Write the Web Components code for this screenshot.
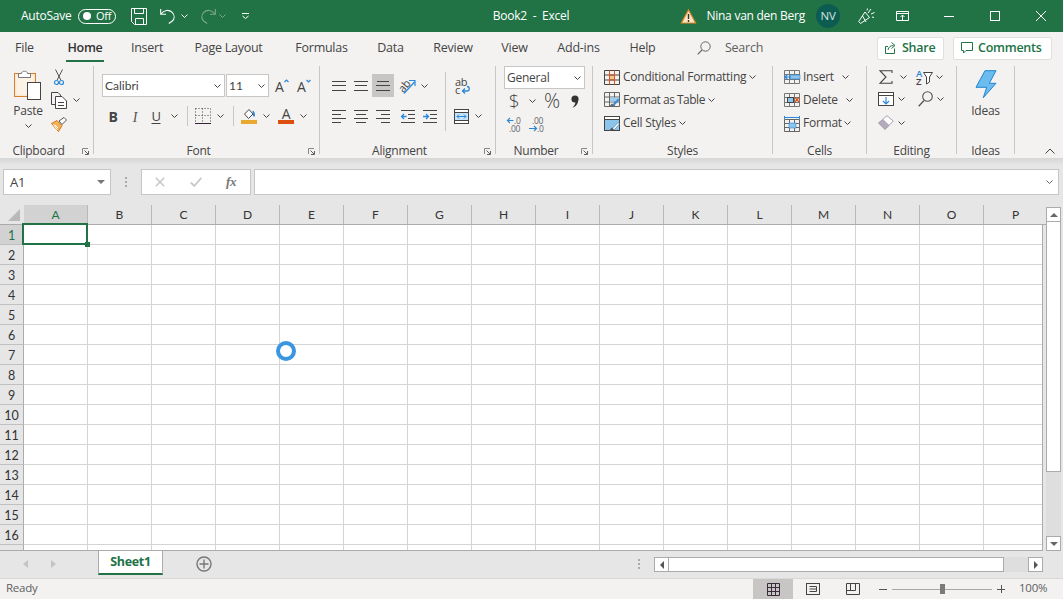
<!DOCTYPE html>
<html lang="en">
<head>
<meta charset="UTF-8">
<title>Book2 - Excel</title>
<style>
  html, body { margin: 0; padding: 0; }
  body { width: 1063px; height: 599px; overflow: hidden; background: #f3f2f1; color: #444;
    font: 12px/16px "Open Sans", "Noto Sans", sans-serif; letter-spacing: -.25px; }
  .cols { display: flex; }
  .stack { display: flex; flex-direction: column; }
  .txt { white-space: nowrap; flex: none; }
  .vdiv { width: 1px; background: #c8c6c4; flex: none; }
</style>
</head>
<body>
<xl-titlebar></xl-titlebar>
<xl-tabstrip></xl-tabstrip>
<xl-ribbon>
  <xl-group w="94" label="Clipboard" launcher>
    <div class="cols">
      <div class="stack" style="width:36px;margin-left:10px;align-items:center">
        <xl-ico name="paste" style="margin-top:4px"></xl-ico>
        <span class="txt" style="margin-top:3px">Paste</span>
        <xl-chev style="margin-top:5px"></xl-chev>
      </div>
      <div class="stack" style="margin-left:4px">
        <xl-row h="22"><xl-btn w="18" icon="scissors"></xl-btn></xl-row>
        <xl-row h="24"><xl-btn w="18" icon="copy"></xl-btn><xl-chev w="16"></xl-chev></xl-row>
        <xl-row h="24"><xl-btn w="18" icon="brush"></xl-btn></xl-row>
      </div>
    </div>
  </xl-group>

  <xl-group w="226" label="Font" launcher>
    <xl-row h="23" style="margin:8px 0 0 8px">
      <xl-select w="123" value="Calibri" calibri></xl-select>
      <xl-select w="43" value="11" calibri style="margin-left:1px"></xl-select>
      <xl-btn w="22" icon="agrow" style="margin-left:2px"></xl-btn>
      <xl-btn w="22" icon="ashrink"></xl-btn>
    </xl-row>
    <xl-row h="22" style="margin:8px 0 0 8px">
      <xl-btn w="22" icon="bold"></xl-btn>
      <xl-btn w="22" icon="italic"></xl-btn>
      <xl-btn w="20" icon="underline"></xl-btn>
      <xl-chev w="16"></xl-chev>
      <div class="vdiv" style="height:20px;margin-left:5px"></div>
      <xl-btn w="29" icon="borders"></xl-btn>
      <xl-chev w="6"></xl-chev>
      <div class="vdiv" style="height:20px;margin-left:10px"></div>
      <xl-btn w="29" icon="fill"></xl-btn>
      <xl-chev w="6"></xl-chev>
      <xl-btn w="24" icon="fontcolor" style="margin-left:5px"></xl-btn>
      <xl-chev w="10"></xl-chev>
    </xl-row>
  </xl-group>

  <xl-group w="176" label="Alignment" launcher>
    <div class="cols">
      <div class="stack" style="width:99px;margin:8px 0 0 8px">
        <xl-row h="23">
          <xl-btn w="22" icon="atop"></xl-btn>
          <xl-btn w="22" icon="amiddle"></xl-btn>
          <xl-btn w="22" icon="abottom" active></xl-btn>
          <xl-btn w="27" icon="orient"></xl-btn>
          <xl-chev w="6"></xl-chev>
        </xl-row>
        <xl-row h="22" style="margin-top:8px">
          <xl-btn w="22" icon="aleft"></xl-btn>
          <xl-btn w="22" icon="acenter"></xl-btn>
          <xl-btn w="22" icon="aright"></xl-btn>
          <xl-btn w="28" icon="outdent"></xl-btn>
          <xl-btn w="16" icon="indent"></xl-btn>
        </xl-row>
      </div>
      <div class="vdiv" style="height:59px;margin:6px 0 0 18px"></div>
      <div class="stack" style="margin-top:8px">
        <xl-row h="23"><xl-btn w="32" icon="wrap"></xl-btn></xl-row>
        <xl-row h="22" style="margin-top:8px"><xl-btn w="30" icon="merge"></xl-btn><xl-chev w="4"></xl-chev></xl-row>
      </div>
    </div>
  </xl-group>

  <xl-group w="97" label="Number" launcher>
    <xl-row h="23" style="margin-left:8px"><xl-select w="81" value="General"></xl-select></xl-row>
    <xl-row h="24" style="margin-left:8px">
      <xl-btn w="20"><span style="font-size:19px;font-weight:300">$</span></xl-btn>
      <xl-chev w="16"></xl-chev>
      <xl-btn w="24"><span style="font-size:20px;font-weight:300">%</span></xl-btn>
      <xl-btn w="22" icon="comma"></xl-btn>
    </xl-row>
    <xl-row h="22" style="margin-left:8px">
      <xl-btn w="22" icon="incdec"></xl-btn>
      <xl-btn w="21" icon="decdec"></xl-btn>
    </xl-row>
  </xl-group>

  <xl-group w="180" label="Styles">
    <xl-row h="22" style="margin-left:11px"><xl-ico name="condfmt"></xl-ico><span class="txt" style="margin-left:3px">Conditional Formatting</span><xl-chev style="margin-left:3px"></xl-chev></xl-row>
    <xl-row h="23" style="margin-left:11px"><xl-ico name="fmttable"></xl-ico><span class="txt" style="margin-left:3px;letter-spacing:-.5px">Format as Table</span><xl-chev style="margin-left:3px"></xl-chev></xl-row>
    <xl-row h="24" style="margin-left:11px"><xl-ico name="cellstyles"></xl-ico><span class="txt" style="margin-left:3px">Cell Styles</span><xl-chev style="margin-left:3px"></xl-chev></xl-row>
  </xl-group>

  <xl-group w="94" label="Cells">
    <xl-row h="22" style="margin-left:11px"><xl-ico name="cellins"></xl-ico><span class="txt" style="margin-left:3px;width:35px">Insert</span><xl-chev w="14"></xl-chev></xl-row>
    <xl-row h="23" style="margin-left:11px"><xl-ico name="celldel"></xl-ico><span class="txt" style="margin-left:3px;width:39px">Delete</span><xl-chev w="14"></xl-chev></xl-row>
    <xl-row h="24" style="margin-left:11px"><xl-ico name="cellfmt"></xl-ico><span class="txt" style="margin-left:3px;width:39px">Format</span><xl-chev w="10"></xl-chev></xl-row>
  </xl-group>

  <xl-group w="90" label="Editing">
    <xl-row h="21" style="margin-left:8px">
      <xl-btn w="22" icon="sigma"></xl-btn><xl-chev w="12"></xl-chev>
      <xl-btn w="21" icon="sort" style="margin-left:5px"></xl-btn><xl-chev w="8"></xl-chev>
    </xl-row>
    <xl-row h="23" style="margin-left:8px">
      <xl-btn w="22" icon="filldown"></xl-btn><xl-chev w="8"></xl-chev>
      <xl-btn w="22" icon="find" style="margin-left:9px"></xl-btn><xl-chev w="8"></xl-chev>
    </xl-row>
    <xl-row h="25" style="margin-left:8px">
      <xl-btn w="22" icon="eraser"></xl-btn><xl-chev w="8"></xl-chev>
    </xl-row>
  </xl-group>

  <xl-group w="58" label="Ideas">
    <div class="stack" style="align-items:center">
      <xl-ico name="bolt" style="margin-top:4px"></xl-ico>
      <span class="txt" style="margin-top:5px">Ideas</span>
    </div>
  </xl-group>
</xl-ribbon>
<xl-formulabar></xl-formulabar>
<xl-sheet></xl-sheet>
<xl-sheettabs></xl-sheettabs>
<xl-statusbar></xl-statusbar>
<xl-spinner></xl-spinner>

<script>
const INK = '#444';
const BLUE = '#2b88d8';
const row3 = (ys, x1, x2) => ys.map(y => `M${x1} ${y}H${x2}`).join('');

// every icon: [width, height, svg markup]
const ICONS = {
  paste: [28, 30, `<rect x=".5" y="3.5" width="21" height="23" fill="#f8e9d2" stroke="#d9802e"/><rect x="2.5" y="5.5" width="17" height="19" fill="#fbf3e6"/>
    <path d="M4.5 7.5V3.5H7.5C7.5 .5 13.5 .5 13.5 3.5H16.5V7.5Z" fill="#fff" stroke="#777"/>
    <rect x="13.5" y="12.5" width="13" height="17" fill="#fff" stroke="#444"/>`],
  scissors: [10, 16, `<path d="M1.5.5 6.8 11M8.5.5 3.2 11" fill="none" stroke="#555"/><circle cx="2.5" cy="13.5" r="2" fill="none" stroke="${BLUE}" stroke-width="1.2"/><circle cx="7.5" cy="13.5" r="2" fill="none" stroke="${BLUE}" stroke-width="1.2"/>`],
  copy: [16, 17, `<path d="M4.5 12.5H.5V.5H7L9.5 3V5" fill="none" stroke="${INK}"/><path d="M4.5 4.5H11L15.5 9V16.5H4.5Z" fill="#fff" stroke="${INK}"/><path d="M7 10.5H13M7 13.5H13" stroke="${INK}"/>`],
  brush: [16, 15, `<path d="M.5 6.5 6 3.5 11 8.5 7.5 14.5Z" fill="#f3b25c" stroke="#d9780f"/><path d="M4 8 7 11M2.5 7.5 6.5 13" stroke="#fff"/><path d="M8 4 13 .5 15.5 3 11 7.5Z" fill="#fff" stroke="#555"/>`],
  launcher: [7, 7, `<path d="M.5 6V.5H6" fill="none" stroke="#8a8886"/><path d="M2.5 2.5 6 6M6.5 3V6.5H3" fill="none" stroke="#605e5c"/>`],
  agrow: [15, 14, `<text x="0" y="13" font-size="14" fill="${INK}" font-family="Open Sans">A</text><path d="M9.5 3 11.5 1 13.5 3" fill="none" stroke="${BLUE}" stroke-width="1.2"/>`],
  ashrink: [15, 14, `<text x="0" y="13" font-size="14" fill="${INK}" font-family="Open Sans">A</text><path d="M9.5 1 11.5 3 13.5 1" fill="none" stroke="${BLUE}" stroke-width="1.2"/>`],
  bold: [10, 14, `<text x="5" y="12.5" text-anchor="middle" font-size="14" font-weight="700" fill="#444" font-family="Open Sans">B</text>`],
  italic: [10, 14, `<text x="5" y="12.5" text-anchor="middle" font-size="14" font-style="italic" fill="#555" font-family="Liberation Serif">I</text>`],
  underline: [10, 15, `<text x="5" y="11.5" text-anchor="middle" font-size="13" fill="#444" font-family="Open Sans">U</text><path d="M.5 14.5H9.5" stroke="#444"/>`],
  borders: [16, 16, `<path d="M.5.5H15.5M.5 7.5H15.5M7.5 .5V15M.5.5V15M15.5.5V15" fill="none" stroke="#444" stroke-dasharray="1 2"/><path d="M0 15.5H16" stroke="#3b1f3b"/>`],
  fill: [16, 16, `<path d="M3.5 6 8 1.5 12 6 7.5 10.5Z" fill="#fff" stroke="#444"/><path d="M11.5 2.5C13 3 14 4.5 14 7.5 14 9 12 9 12 7.5Z" fill="${BLUE}"/><rect y="12" width="16" height="4" fill="#e9a82e"/>`],
  fontcolor: [16, 16, `<text x="8" y="10.5" text-anchor="middle" font-size="14" fill="#444" font-family="Open Sans">A</text><rect y="12" width="16" height="4" fill="#dc4f0e"/>`],
  atop: [14, 10, `<path d="${row3([.5,4.5,9.5],0,14)}" stroke="${INK}" fill="none"/>`],
  amiddle: [14, 10, `<path d="M0 .5H14M1 4.5H13M0 9.5H14" stroke="${INK}" fill="none"/>`],
  abottom: [14, 10, `<path d="M1 .5H13M0 4.5H14M0 9.5H14" stroke="${INK}" fill="none"/>`],
  aleft: [14, 13, `<path d="M0 .5H14M0 4.5H9M0 8.5H14M0 12.5H9" stroke="${INK}" fill="none"/>`],
  acenter: [14, 13, `<path d="M0 .5H14M2 4.5H12M0 8.5H14M2 12.5H12" stroke="${INK}" fill="none"/>`],
  aright: [14, 13, `<path d="M0 .5H14M5 4.5H14M0 8.5H14M5 12.5H14" stroke="${INK}" fill="none"/>`],
  outdent: [14, 13, `<path d="M0 .5H14M7 4.5H14M7 8.5H14M0 12.5H14" stroke="${INK}" fill="none"/><path d="M5.5 6.5H.5M3 4 .5 6.5 3 9" stroke="${BLUE}" stroke-width="1.3" fill="none"/>`],
  indent: [14, 13, `<path d="M0 .5H14M7 4.5H14M7 8.5H14M0 12.5H14" stroke="${INK}" fill="none"/><path d="M0 6.5H5M3 4 5.5 6.5 3 9" stroke="${BLUE}" stroke-width="1.3" fill="none"/>`],
  orient: [17, 16, `<text x="0" y="11" font-size="11" fill="#444" font-family="Open Sans" transform="rotate(-50 5 8) translate(-1 1)">ab</text><path d="M5 15.5 15.5 4M10 2.5H16V8" fill="none" stroke="${BLUE}" stroke-width="1.2"/>`],
  wrap: [15, 17, `<text x="0" y="8.5" font-size="11" fill="#444" font-family="Open Sans">ab</text><text x="0" y="16.5" font-size="11" fill="#444" font-family="Open Sans">c</text><path d="M8 14H12C15 14 15 9.5 12 9.5M10 11.5 7.5 14 10 16.5" fill="none" stroke="${BLUE}" stroke-width="1.3"/>`],
  merge: [15, 15, `<rect x=".5" y=".5" width="14" height="14" fill="#fff" stroke="#444"/><rect x="1" y="4" width="13" height="7" fill="#c7e3f7"/><path d="M1 3.5H14M1 11.5H14" stroke="#444"/><path d="M3 7.5H12M5 5.5 3 7.5 5 9.5M10 5.5 12 7.5 10 9.5" fill="none" stroke="${BLUE}"/>`],
  comma: [8, 13, `<circle cx="4" cy="4" r="3.6" fill="#333"/><path d="M6 3C8.4 6.5 6.5 11 1.5 12.8 4 10 5 7.5 4 6.5Z" fill="#333"/>`],
  incdec: [16, 16, `<text x="7" y="7.5" font-size="8.5" fill="#666" font-family="Open Sans">.0</text><text x="2" y="15.5" font-size="8.5" fill="#666" font-family="Open Sans">.00</text><path d="M6.5 4.5H.5M3 2 .5 4.5 3 7" fill="none" stroke="${BLUE}" stroke-width="1.2"/>`],
  decdec: [16, 16, `<text x="3" y="7.5" font-size="8.5" fill="#666" font-family="Open Sans">.00</text><text x="8" y="15.5" font-size="8.5" fill="#666" font-family="Open Sans">.0</text><path d="M0 12.5H7M5 10 7.5 12.5 5 15" fill="none" stroke="${BLUE}" stroke-width="1.2"/>`],
  condfmt: [16, 15, `<rect x="5" y="5" width="6" height="5" fill="#f6c48c"/><path d="M.5.5H15.5V14.5H.5ZM.5 5H15.5M.5 10H15.5" fill="none" stroke="#444"/><path d="M5.5.5V14.5M10.5.5V14.5" stroke="#d9541e"/><path d="M5 5H11M5 10H11" stroke="#d9541e"/>`],
  fmttable: [16, 15, `<path d="M.5.5H15.5V14.5H.5ZM.5 5H15.5M.5 10H15.5M5.5.5V14.5M10.5.5V14.5" fill="none" stroke="#666"/><rect x="6" y="5.5" width="9" height="4" fill="#9fcdf0"/><path d="M8 13 14 6.5 15.5 8 10 14Z" fill="#3b8fd6"/><path d="M5 14.5 8 11.5 10 13.5 6 15Z" fill="#666"/>`],
  cellstyles: [16, 15, `<rect x=".5" y=".5" width="15" height="14" fill="#fff" stroke="#444"/><rect x="1" y="4" width="14" height="10" fill="#8cc4ec"/><path d="M1 3.5H15" stroke="#444"/><path d="M8 13 14 6.5 15.5 8 10 14Z" fill="#fff" stroke="#2b6fb0" stroke-width=".6"/><path d="M5 14.5 8 11.5 10 13.5 6 15Z" fill="#555"/>`],
  cellins: [16, 14, `<path d="M.5.5H15.5V13.5H.5ZM5.5.5V13.5M10.5.5V13.5M.5 4.5H15.5M.5 9.5H15.5" fill="none" stroke="#777"/><rect x="6" y="5" width="10" height="4" fill="#8cc4ec" stroke="#2b88d8" stroke-width=".6"/><path d="M7 7H.8M3.5 4.5 1 7 3.5 9.5" fill="none" stroke="${BLUE}" stroke-width="1.2"/>`],
  celldel: [16, 14, `<path d="M.5.5H15.5V13.5H.5ZM5.5.5V13.5M10.5.5V13.5M.5 4.5H15.5M.5 9.5H15.5" fill="none" stroke="#777"/><rect x="3.5" y="4.5" width="6" height="5" fill="#8cc4ec" stroke="#444"/><path d="M11 4.5 15 9M15 4.5 11 9" stroke="#d9541e" stroke-width="1.3"/>`],
  cellfmt: [16, 17, `<path d="M.5 1V4M15.5 1V4M1 2.5H15" stroke="${BLUE}" fill="none"/><path d="M.5 4.5H15.5V16.5H.5ZM5.5 4.5V16.5M10.5 4.5V16.5M.5 8.5H15.5M.5 12.5H15.5" fill="none" stroke="#666"/><rect x="5" y="8" width="7" height="5" fill="#8cc4ec" stroke="#2b88d8" stroke-width=".6"/>`],
  sigma: [14, 14, `<path d="M13 3V.7H1L7 7 1 13.3H13V11" fill="none" stroke="#444" stroke-width="1.1"/>`],
  sort: [17, 16, `<text x="0" y="7.5" font-size="9.5" font-weight="600" fill="${BLUE}" font-family="Open Sans">A</text><text x="0" y="16" font-size="9.5" font-weight="600" fill="#444" font-family="Open Sans">Z</text><path d="M7.5 3.5H16.5L13.5 8V13L10.5 15V8Z" fill="#fff" stroke="#444"/>`],
  filldown: [16, 14, `<rect x=".5" y=".5" width="15" height="13" fill="#fff" stroke="#444"/><path d="M1 3.5H15" stroke="#444"/><path d="M8 5V12M5 9 8 12 11 9" fill="none" stroke="${BLUE}" stroke-width="1.2"/>`],
  find: [15, 16, `<circle cx="9.5" cy="5.5" r="4.8" fill="none" stroke="#555" stroke-width="1.1"/><path d="M6 9.5.7 15.3" stroke="#555" stroke-width="1.3"/>`],
  eraser: [16, 15, `<path d="M.7 8 9 .7 15.3 6 7 14.3Z" fill="#fff" stroke="#a79fae"/><path d="M.7 8 4.8 4.5 11 10.4 7 14.3Z" fill="#b5abbb" stroke="#a79fae"/>`],
  bolt: [22, 28, `<path d="M10 .7H21L14.3 13.3H21L8.3 27.7 11.7 17.3H1Z" fill="#6cbcf0" stroke="#1f85cc"/>`],
  share: [12, 12, `<path d="M9.5 6.5V11.5H.5V4.5H3" fill="none" stroke="#217346"/><path d="M3 8C3.5 5 5.5 3.5 8.5 3.5M6.5.5 10 3.5 6.5 6.5" fill="none" stroke="#217346"/>`],
  comment: [12, 12, `<path d="M.5.5H11.5V8.5H5L2.5 11V8.5H.5Z" fill="none" stroke="#217346"/>`],
  search: [14, 14, `<circle cx="8.5" cy="5.5" r="4.7" fill="none" stroke="#666"/><path d="M5 9 .7 13.3" stroke="#666" stroke-width="1.2"/>`],
  save: [16, 17, `<path d="M.5.5H15.5V16.5H3.5L.5 13.5ZM3.5.5V5.5H12.5V.5M4.5 16.5V10.5H12.5V16.5" fill="none" stroke="#fff"/>`],
  undo: [16, 16, `<path d="M.7 1V6.2H6M1 6C4 1.8 9 1.3 12.2 4.4 15.3 7.5 14.3 11 12.3 13L8.8 15.5" fill="none" stroke="#fff" stroke-width="1.1"/>`],
  redo: [16, 16, `<path d="M15.3 1V6.2H10M15 6C12 1.8 7 1.3 3.8 4.4 .7 7.5 1.7 11 3.7 13L7.2 15.5" fill="none" stroke="#7ba88f" stroke-width="1.1"/>`],
  customize: [7, 6, `<path d="M0 .5H7M.5 3 3.5 5.5 6.5 3" fill="none" stroke="#fff"/>`],
  warning: [15, 15, `<path d="M7.5 1 14.5 14H.5Z" fill="#fde6c6" stroke="#e58a2a" stroke-width="1.2"/><path d="M7.5 5V10M7.5 11V13" stroke="#333" stroke-width="1.4"/>`],
  party: [17, 16, `<path d="M.7 13.5 2.5 15.5 11.5 9.5 7 4Z" fill="none" stroke="#fff"/><path d="M4.5 8 8 14" stroke="#fff"/><path d="M10 5 13 1M13 6 16.5 4.5M9 2.5 9.5.5M14 9 16 9.5" stroke="#fff" fill="none"/>`],
  display: [13, 10, `<path d="M.5.5H12.5V9.5H.5ZM.5 2.5H12.5" fill="none" stroke="#fff"/><path d="M6.5 9V4M4.5 6 6.5 4 8.5 6" fill="none" stroke="#fff"/>`],
  min: [10, 1, `<path d="M0 .5H10" stroke="#fff"/>`],
  max: [10, 10, `<rect x=".5" y=".5" width="9" height="9" fill="none" stroke="#fff"/>`],
  close: [10, 10, `<path d="M0 0 10 10M10 0 0 10" stroke="#fff"/>`],
  up: [10, 6, `<path d="M.5 5.5 5 1 9.5 5.5" fill="none" stroke="#444"/>`],
  cancel: [10, 10, `<path d="M.8.8 9.2 9.2M9.2.8.8 9.2" stroke="#c8c8c8" stroke-width="1.6"/>`],
  enter: [12, 10, `<path d="M.8 5.5 4.3 9 11.3.8" fill="none" stroke="#c8c8c8" stroke-width="1.8"/>`],
  fx: [12, 12, `<text x="0" y="10" font-size="13" font-style="italic" font-weight="700" fill="#777" font-family="Liberation Serif">fx</text>`],
  vnormal: [13, 13, `<path d="M.5.5H12.5V12.5H.5ZM4.5.5V12.5M8.5.5V12.5M.5 4.5H12.5M.5 8.5H12.5" fill="none" stroke="#3a2a3a"/>`],
  vpage: [14, 12, `<rect x=".5" y=".5" width="13" height="11" fill="none" stroke="#444"/><path d="M3.5 3.5H10.5V8.5H3.5M3.5 6H10.5" fill="none" stroke="#444"/>`],
  vbreak: [14, 12, `<path d="M.5 .5H13.5V11.5H.5ZM.5 7.5H9.5V.5M4.5 .5V7.5" fill="none" stroke="#444"/>`],
};

class XlIco extends HTMLElement {
  connectedCallback() {
    const [w, h, body] = ICONS[this.getAttribute('name')];
    this.attachShadow({mode: 'open'}).innerHTML = `<style>:host{display:block;flex:none;width:${w}px;height:${h}px} svg{display:block;overflow:visible}</style>
      <svg width="${w}" height="${h}" viewBox="0 0 ${w} ${h}">${body}</svg>`;
  }
}

class XlChev extends HTMLElement {
  connectedCallback() {
    const w = this.getAttribute('w') || 7;
    const color = this.getAttribute('color') || INK;
    this.attachShadow({mode: 'open'}).innerHTML = `<style>:host{display:flex;flex:none;width:${w}px;height:4px;justify-content:center;align-items:center}
      svg{display:block;flex:none}</style>
      <svg width="7" height="4" viewBox="0 0 7 4"><path d="M.5.5 3.5 3.5 6.5.5" fill="none" stroke="${color}"/></svg>`;
  }
}

class XlRow extends HTMLElement {
  connectedCallback() {
    this.attachShadow({mode: 'open'}).innerHTML = `<style>:host{display:flex;align-items:center;flex:none;height:${this.getAttribute('h')}px}</style><slot></slot>`;
  }
}

class XlBtn extends HTMLElement {
  connectedCallback() {
    const icon = this.getAttribute('icon');
    this.attachShadow({mode: 'open'}).innerHTML = `<style>
      :host{display:flex;align-items:center;justify-content:center;flex:none;height:23px;width:${this.getAttribute('w')}px}
      :host([active]){background:#c8c6c4}
      </style>${icon ? `<xl-ico name="${icon}"></xl-ico>` : ''}<slot></slot>`;
  }
}

class XlSelect extends HTMLElement {
  connectedCallback() {
    const font = this.hasAttribute('calibri') ? 'font-family:Lato,sans-serif;letter-spacing:0;font-size:12px;' : '';
    this.attachShadow({mode: 'open'}).innerHTML = `<style>
      :host{display:flex;align-items:center;flex:none;box-sizing:border-box;height:23px;width:${this.getAttribute('w')}px;
        background:#fff;border:1px solid #c8c6c4;padding:0 3px 0 2px;color:#444}
      span{flex:1;${font}}
      </style><span>${this.getAttribute('value')}</span><xl-chev></xl-chev>`;
  }
}

class XlGroup extends HTMLElement {
  connectedCallback() {
    const launcher = this.hasAttribute('launcher');
    this.attachShadow({mode: 'open'}).innerHTML = `<style>
      :host{display:flex;flex-direction:column;flex:none;box-sizing:border-box;width:${this.getAttribute('w')}px;height:88px;margin-top:2px;border-right:1px solid #c8c6c4}
      .body{height:76px}
      .label{display:grid;grid-template-columns:1fr ${launcher ? '16px' : '0'};height:12px;line-height:17px;text-align:center;white-space:nowrap}
      xl-ico{margin:6px 0 0 5px}
      </style><div class="body"><slot></slot></div>
      <div class="label"><span>${this.getAttribute('label')}</span>${launcher ? '<xl-ico name="launcher"></xl-ico>' : ''}</div>`;
  }
}

class XlRibbon extends HTMLElement {
  connectedCallback() {
    this.attachShadow({mode: 'open'}).innerHTML = `<style>
      :host{display:flex;height:94px;background:#f3f2f1}
      xl-ico{margin:auto 8px 4px auto}
      </style><slot></slot><xl-ico name="up"></xl-ico>`;
  }
}

class XlTitlebar extends HTMLElement {
  connectedCallback() {
    this.attachShadow({mode: 'open'}).innerHTML = `<style>
      :host{display:grid;grid-template-columns:1fr auto 1fr;align-items:center;height:32px;background:#217346;color:#fff}
      .l,.r{display:flex;align-items:center;height:32px}
      .l{padding-left:21px}
      .r{justify-content:flex-end}
      .auto{width:50px;white-space:nowrap}
      .toggle{display:flex;align-items:center;box-sizing:border-box;width:38px;height:15px;margin-left:7px;border:1px solid #fff;border-radius:8px;font-size:11px;letter-spacing:-.2px}
      .toggle i{width:8px;height:8px;border-radius:50%;background:#fff;margin:0 5px 0 4px;flex:none}
      .win{display:flex;align-items:center;justify-content:center;box-sizing:border-box;width:46px;height:32px}
      .win.s{padding-left:2px}
      .avatar{display:flex;align-items:center;justify-content:center;width:24px;height:24px;border-radius:50%;background:#0d5c52;color:#cfe6e0;font-size:11.5px;margin:0 18px 0 11px}
      .name{white-space:nowrap}
      .title{margin-left:-1px}
      </style>
      <div class="l">
        <span class="auto">AutoSave</span>
        <div class="toggle"><i></i><span>Off</span></div>
        <xl-ico name="save" style="margin-left:15px"></xl-ico>
        <xl-ico name="undo" style="margin-left:13px"></xl-ico>
        <xl-chev color="#fff" style="margin-left:5px"></xl-chev>
        <xl-ico name="redo" style="margin-left:12px"></xl-ico>
        <xl-chev color="#7ba88f" style="margin-left:3px"></xl-chev>
        <xl-ico name="customize" style="margin-left:16px"></xl-ico>
      </div>
      <div class="title">Book2&nbsp; -&nbsp; Excel</div>
      <div class="r">
        <xl-ico name="warning"></xl-ico>
        <span class="name" style="margin-left:10px">Nina van den Berg</span>
        <div class="avatar">NV</div>
        <xl-ico name="party" style="margin-right:4px"></xl-ico>
        <div class="win"><xl-ico name="display"></xl-ico></div>
        <div class="win s"><xl-ico name="min"></xl-ico></div>
        <div class="win s"><xl-ico name="max"></xl-ico></div>
        <div class="win s"><xl-ico name="close"></xl-ico></div>
      </div>`;
  }
}

class XlTabstrip extends HTMLElement {
  connectedCallback() {
    // [label, text width, gap before]
    const tabs = [['File',19,15],['Home',38,32],['Insert',32,27],['Page Layout',71,30],['Formulas',53,31],['Data',27,29],['Review',40,29],['View',27,28],['Add-ins',45,28],['Help',27,28]];
    const html = tabs.map(([t, w, m]) => `<div class="tab${t === 'Home' ? ' on' : ''}" style="width:${w}px;margin-left:${m}px">${t}</div>`).join('');
    this.attachShadow({mode: 'open'}).innerHTML = `<style>
      :host{display:flex;align-items:center;height:32px;background:#f3f2f1;font-size:12.5px}
      .tab{display:flex;justify-content:center;align-items:center;height:27px;margin-top:0;white-space:nowrap;box-sizing:border-box;border-bottom:2px solid transparent;padding-top:2px}
      .on{font-weight:600;color:#333;border-bottom-color:#217346}
      .search{display:flex;align-items:center;margin-left:41px;color:#605e5c;gap:14px}
      .right{display:flex;gap:9px;margin-left:auto;margin-right:11px}
      .btn{display:flex;align-items:center;box-sizing:border-box;height:23px;background:#fff;border:1px solid #e1dfdd;border-radius:2px;color:#217346;font-weight:600;font-size:12.5px;padding-left:7px;gap:5px}
      </style>${html}
      <div class="search"><xl-ico name="search"></xl-ico><span>Search</span></div>
      <div class="right">
        <div class="btn" style="width:67px"><xl-ico name="share"></xl-ico><span>Share</span></div>
        <div class="btn" style="width:99px"><xl-ico name="comment"></xl-ico><span>Comments</span></div>
      </div>`;
  }
}

class XlFormulabar extends HTMLElement {
  connectedCallback() {
    this.attachShadow({mode: 'open'}).innerHTML = `<style>
      :host{display:flex;align-items:flex-start;box-sizing:border-box;height:47px;padding:11px 0 0 3px;background:linear-gradient(#d6d6d6,#e6e6e6 7px)}
      .box{display:flex;align-items:center;box-sizing:border-box;height:26px;background:#fff;border:1px solid #c6c6c6;flex:none}
      .name{width:108px;padding:0 5px 0 6px;font-size:13px;color:#444}
      .name span{flex:1}
      .tri{width:0;height:0;border:4px solid transparent;border-top:4px solid #777;border-bottom:0}
      .dots{width:2px;height:10px;margin:8px 14px 0 14px;background:repeating-linear-gradient(#aaa 0 2px,transparent 2px 4px);flex:none}
      .fn{width:110px;padding:0}
      .fn div{width:36px;display:flex;justify-content:center}
      .input{width:805px;margin-left:3px;justify-content:flex-end;padding-right:5px}
      </style>
      <div class="box name"><span>A1</span><div class="tri"></div></div>
      <div class="dots"></div>
      <div class="box fn"><div><xl-ico name="cancel"></xl-ico></div><div><xl-ico name="enter"></xl-ico></div><div><xl-ico name="fx"></xl-ico></div></div>
      <div class="box input"><xl-chev color="#666"></xl-chev></div>`;
  }
}

class XlSheet extends HTMLElement {
  connectedCallback() {
    const cols = [...'ABCDEFGHIJKLMNOP'];
    const head = cols.map((c, i) => `<div class="ch${i ? '' : ' sel'}">${c}</div>`).join('');
    let rows = '';
    for (let r = 1; r <= 17; r++) {
      rows += `<div class="row"><div class="rh${r === 1 ? ' sel' : ''}">${r < 17 ? r : ''}</div>` + cols.map(() => '<div class="cell"></div>').join('') + '</div>';
    }
    this.attachShadow({mode: 'open'}).innerHTML = `<style>
      :host{display:flex;height:346px;background:#e6e6e6;font:12px/16px Lato,sans-serif;letter-spacing:0;color:#333}
      .main{position:relative;width:1046px;flex:none;overflow:hidden}
      .head{display:flex;height:20px;box-sizing:border-box;width:1048px;border-bottom:1px solid #ababab}
      .corner{box-sizing:border-box;width:24px;flex:none;padding:4px 0 0 8px;border-right:1px solid #e6e6e6}
      .corner i{display:block;width:0;height:0;border-left:12px solid transparent;border-bottom:12px solid #b9b9b9}
      .ch{display:flex;align-items:center;justify-content:center;box-sizing:border-box;width:64px;flex:none;border-right:1px solid #b8b8b8}
      .ch.sel{background:#d2d2d2;color:#217346}
      .grid{width:1043px;height:326px;box-sizing:border-box;overflow:hidden;border-right:1px solid #ababab;border-bottom:1px solid #ababab;background:#fff}
      .row{display:flex;height:20px;width:1048px}
      .rh{display:flex;align-items:center;justify-content:center;box-sizing:border-box;width:24px;flex:none;background:#e6e6e6;border-right:1px solid #ababab;border-bottom:1px solid #c0c0c0;font-size:12.5px;padding-top:2px}
      .rh.sel{background:#d2d2d2;color:#217346}
      .cell{box-sizing:border-box;width:64px;flex:none;border-right:1px solid #d4d4d4;border-bottom:1px solid #d4d4d4}
      .cursor{position:absolute;left:22px;top:18px;width:66px;height:22px;box-sizing:border-box;border:2px solid #217346}
      .cursor i{position:absolute;right:-4px;bottom:-4px;width:5px;height:5px;background:#217346}
      .vs{width:15px;flex:none;margin-left:0;padding-top:2px;display:flex;flex-direction:column;box-sizing:border-box}
      .btn{display:flex;align-items:center;justify-content:center;box-sizing:border-box;height:15px;background:#fff;border:1px solid #ababab;flex:none}
      .thumb{box-sizing:border-box;height:250px;background:#fff;border:1px solid #ababab;border-top:0;flex:none}
      .track{flex:1;background:#dedede}
      .up{border:4px solid transparent;border-bottom:4px solid #666;border-top:0}
      .dn{border:4px solid transparent;border-top:4px solid #666;border-bottom:0}
      </style>
      <div class="main">
        <div class="head"><div class="corner"><i></i></div>${head}</div>
        <div class="grid">${rows}</div>
        <div class="cursor"><i></i></div>
      </div>
      <div class="vs">
        <div class="btn"><i class="up"></i></div>
        <div class="thumb"></div>
        <div class="track"></div>
        <div class="btn"><i class="dn"></i></div>
      </div>`;
  }
}

class XlSheettabs extends HTMLElement {
  connectedCallback() {
    this.attachShadow({mode: 'open'}).innerHTML = `<style>
      :host{display:flex;align-items:flex-start;height:27px;background:#e6e6e6}
      .nav{display:flex;width:98px;flex:none;height:26px;align-items:center}
      .p{width:0;height:0;border:4px solid transparent;border-right:5px solid #c4c4c4;border-left:0;margin-left:23px}
      .n{width:0;height:0;border:4px solid transparent;border-left:5px solid #c4c4c4;border-right:0;margin-left:23px}
      .tab{display:flex;align-items:center;justify-content:center;box-sizing:border-box;width:65px;height:25px;margin-top:-1px;background:#fff;border:solid #ababab;border-width:0 1px;border-bottom:2px solid #217346;color:#217346;font-weight:700;font-size:12.5px;letter-spacing:-.3px;flex:none}
      .plus{width:16px;height:16px;margin:5px 0 0 33px;flex:none}
      .dots{width:2px;height:10px;margin:8px 0 0 426px;background:repeating-linear-gradient(#aaa 0 2px,transparent 2px 4px);flex:none}
      .hs{display:flex;width:389px;height:15px;margin:6px 0 0 14px;flex:none}
      .btn{display:flex;align-items:center;justify-content:center;box-sizing:border-box;width:15px;background:#fff;border:1px solid #ababab;flex:none}
      .thumb{box-sizing:border-box;width:335px;background:#fff;border:1px solid #ababab;border-left:0;flex:none}
      .track{flex:1;background:#dedede}
      .bl{border:4px solid transparent;border-right:4px solid #555;border-left:0}
      .br{border:4px solid transparent;border-left:4px solid #555;border-right:0}
      </style>
      <div class="nav"><i class="p"></i><i class="n"></i></div>
      <div class="tab">Sheet1</div>
      <svg class="plus" viewBox="0 0 16 16"><circle cx="8" cy="8" r="7" fill="none" stroke="#777" stroke-width="1.4"/><path d="M8 3.5V12.5M3.5 8H12.5" stroke="#777" stroke-width="1.4"/></svg>
      <div class="dots"></div>
      <div class="hs">
        <div class="btn"><i class="bl"></i></div>
        <div class="thumb"></div>
        <div class="track"></div>
        <div class="btn"><i class="br"></i></div>
      </div>`;
  }
}

class XlStatusbar extends HTMLElement {
  connectedCallback() {
    this.attachShadow({mode: 'open'}).innerHTML = `<style>
      :host{display:flex;align-items:center;box-sizing:border-box;height:21px;background:#f3f2f1;border-top:1px solid #d8d8d8;color:#605e5c;font-size:11.5px}
      .ready{width:753px;padding:0 0 2px 6px;box-sizing:border-box;flex:none}
      .v{display:flex;align-items:center;justify-content:center;width:40px;height:20px;flex:none}
      .v.on{background:#c8c6c4}
      .minus{width:8px;height:1px;background:#555;margin-left:6px;flex:none}
      .slider{display:flex;align-items:center;justify-content:center;width:100px;height:1px;background:#a8a8a8;margin-left:5px;flex:none}
      .slider i{width:5px;height:10px;background:#7a7a7a;flex:none}
      .plus{width:8px;height:8px;margin-left:5px;flex:none;background:linear-gradient(#555,#555) center/8px 1px no-repeat,linear-gradient(#555,#555) center/1px 8px no-repeat}
      .pct{margin-left:14px;white-space:nowrap;padding-bottom:2px}
      </style>
      <div class="ready">Ready</div>
      <div class="v on"><xl-ico name="vnormal"></xl-ico></div>
      <div class="v"><xl-ico name="vpage"></xl-ico></div>
      <div class="v"><xl-ico name="vbreak"></xl-ico></div>
      <div class="minus"></div>
      <div class="slider"><i></i></div>
      <div class="plus"></div>
      <div class="pct">100%</div>`;
  }
}

// busy cursor that lies over the sheet
class XlSpinner extends HTMLElement {
  connectedCallback() {
    this.attachShadow({mode: 'open'}).innerHTML = `<style>
      :host{position:absolute;left:276px;top:341px;width:20px;height:20px;box-sizing:border-box;border:4.5px solid #3a96e0;border-radius:50%}
      </style>`;
  }
}

const defs = { 'xl-ico': XlIco, 'xl-chev': XlChev, 'xl-row': XlRow, 'xl-btn': XlBtn, 'xl-select': XlSelect, 'xl-group': XlGroup,
  'xl-ribbon': XlRibbon, 'xl-titlebar': XlTitlebar, 'xl-tabstrip': XlTabstrip, 'xl-formulabar': XlFormulabar,
  'xl-sheet': XlSheet, 'xl-sheettabs': XlSheettabs, 'xl-statusbar': XlStatusbar, 'xl-spinner': XlSpinner };
for (const [tag, cls] of Object.entries(defs)) customElements.define(tag, cls);
</script>
</body>
</html>
